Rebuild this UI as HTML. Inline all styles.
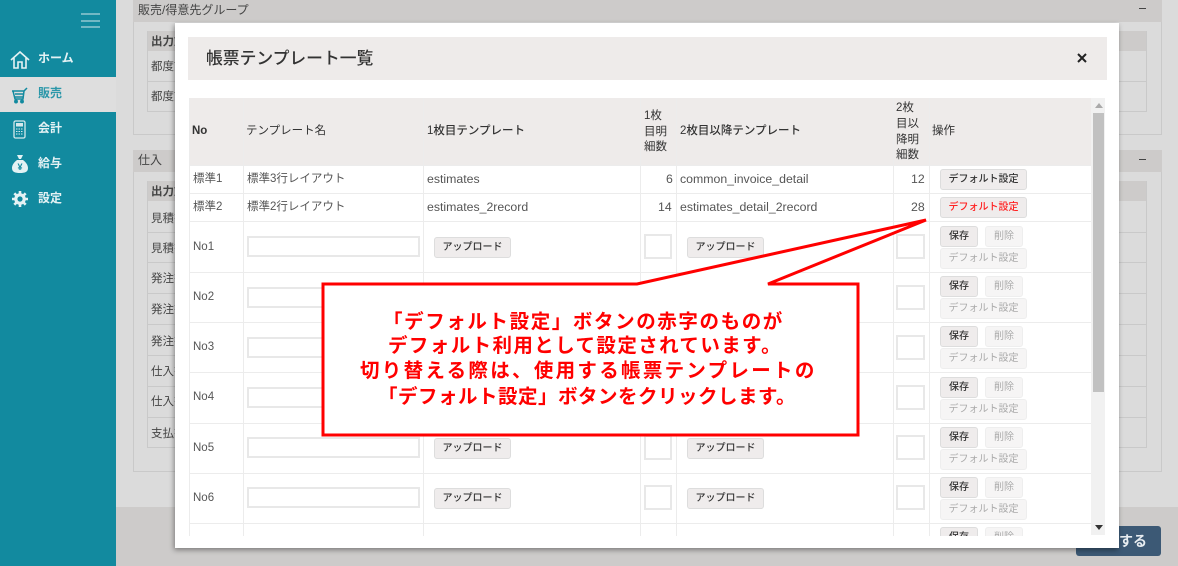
<!DOCTYPE html>
<html lang="ja"><head><meta charset="utf-8"><style>
html,body{margin:0;padding:0}
body{width:1178px;height:566px;position:relative;overflow:hidden;background:#dbdbdb;font-family:"Liberation Sans","Noto Sans CJK JP",sans-serif;color:#444;font-size:11.5px}
div,span,svg{position:absolute;box-sizing:border-box;white-space:nowrap}
.b{border:1px solid #c9c9c9}.h{background:#cdcbca;color:#444}
.nav{left:38px;color:#e4f2f4;font-weight:700;font-size:12px;line-height:16px}
.l{background:#ececec}
.t{line-height:16px;color:#555}.th{color:#333;font-weight:700}
.lat{font-size:12.3px}
.btn{background:#efecec;border:1px solid #ddd;border-radius:3px;color:#333;font-size:10px;text-align:center;line-height:20px;height:21px;font-weight:500}
.dis{background:#f6f5f5;border-color:#eee;color:#aaa;font-weight:400}
.in{background:#fff;border:2px solid #e8e8e8}
.rt{color:#f00;font-weight:700;font-size:19.5px;line-height:24px;text-align:left}
</style></head><body>
<div style="left:116px;top:0;width:1062px;height:507px;background:#dbdbdb"></div>
<div style="left:116px;top:507px;width:1062px;height:59px;background:#cdcbca"></div>
<div class="b" style="left:133px;top:0;width:1029px;height:135px"></div>
<div class="h" style="left:133px;top:0;width:1029px;height:22px;padding:1px 5px;font-size:12px">販売/得意先グループ</div>
<div class="b" style="left:147px;top:31px;width:1000px;height:81px"></div>
<div class="h" style="left:148px;top:31px;width:998px;height:20px;padding:2px 3px;font-weight:700">出力対象</div>
<div style="left:148px;top:81px;width:998px;height:1px;background:#c9c9c9"></div>
<div style="left:151px;top:58px">都度請求</div><div style="left:151px;top:88px">都度請求</div>
<div class="b" style="left:133px;top:150px;width:1029px;height:322px"></div>
<div class="h" style="left:133px;top:150px;width:1029px;height:22px;padding:1px 5px;font-size:12px">仕入</div>
<div class="b" style="left:147px;top:181px;width:1000px;height:267px"></div>
<div class="h" style="left:148px;top:181px;width:998px;height:20px;padding:2px 3px;font-weight:700">出力対象</div>
<div style="left:148px;top:232px;width:998px;height:1px;background:#c9c9c9"></div>
<div style="left:148px;top:262px;width:998px;height:1px;background:#c9c9c9"></div>
<div style="left:148px;top:293px;width:998px;height:1px;background:#c9c9c9"></div>
<div style="left:148px;top:324px;width:998px;height:1px;background:#c9c9c9"></div>
<div style="left:148px;top:355px;width:998px;height:1px;background:#c9c9c9"></div>
<div style="left:148px;top:386px;width:998px;height:1px;background:#c9c9c9"></div>
<div style="left:148px;top:417px;width:998px;height:1px;background:#c9c9c9"></div>
<div style="left:151px;top:210px">見積書</div><div style="left:151px;top:240px">見積書</div><div style="left:151px;top:270px">発注書</div><div style="left:151px;top:301px">発注書</div><div style="left:151px;top:333px">発注書</div><div style="left:151px;top:363px">仕入書</div><div style="left:151px;top:393px">仕入書</div><div style="left:151px;top:425px">支払書</div>
<div style="left:1139px;top:8px;width:7px;height:1px;background:#444"></div>
<div style="left:1139px;top:159px;width:7px;height:1px;background:#444"></div>
<div style="left:1076px;top:526px;width:85px;height:30px;background:#3c5975;border-radius:3px;color:#e8edf1;font-size:14px;font-weight:700;line-height:30px;padding-left:43px">する</div>

<div style="left:0;top:0;width:116px;height:566px;background:#128a9f"></div>
<div style="left:0;top:77px;width:116px;height:35px;background:#dedede"></div>
<div style="left:81px;top:13px;width:19px;height:2px;background:#72b8c4"></div><div style="left:81px;top:20px;width:19px;height:2px;background:#72b8c4"></div><div style="left:81px;top:26px;width:19px;height:2px;background:#72b8c4"></div>
<svg style="left:10px;top:50px" width="20" height="20" viewBox="0 0 20 20" fill="none" stroke="#e4f2f4" stroke-width="1.6"><path d="M1 10 10 2l9 8M4 8v10h4v-6h4v6h4V8"/></svg>
<svg style="left:11px;top:86px" width="18" height="18" viewBox="0 0 18 18" fill="none" stroke="#128a9f" stroke-width="1.5"><path d="M1 5h12l3-3M2 5l2 8h8l1-8M4 8h9M4 11h8"/><circle cx="5" cy="15.500" r="1.200" fill="#128a9f"/><circle cx="11" cy="15.500" r="1.200" fill="#128a9f"/></svg>
<svg style="left:13px;top:120px" width="14" height="19" viewBox="0 0 14 19"><rect x="1" y="1" width="11" height="17" rx="1.500" fill="none" stroke="#d5e9ec" stroke-width="1.300"/><rect x="3" y="3" width="7" height="3.500" fill="#d5e9ec"/><path d="M3 9h7M3 11.500h7M3 14h7" stroke="#d5e9ec" stroke-dasharray="1.500 1"/></svg>
<svg style="left:11px;top:154px" width="18" height="20" viewBox="0 0 18 20"><path d="M6 1h6l-2 4h-2zM6 6h6c4 3 5 6 5 8 0 4-3 5-8 5s-8-1-8-5c0-2 1-5 5-8z" fill="#e4f2f4"/><text x="9" y="16" font-size="9" font-weight="700" text-anchor="middle" fill="#128a9f">¥</text></svg>
<svg style="left:12px;top:190px" width="16" height="18" viewBox="0 0 16 16"><circle cx="8" cy="8" r="4.200" fill="none" stroke="#e4f2f4" stroke-width="3.200"/><path d="M8 0v3M8 13v3M0 8h3M13 8h3M2.300 2.300l2.200 2.200M11.500 11.500l2.200 2.200M2.300 13.700l2.200-2.200M11.500 4.500l2.200-2.200" stroke="#e4f2f4" stroke-width="2.600"/></svg>
<div class="nav" style="top:50px">ホーム</div><div class="nav" style="top:85px;color:#2b97a9">販売</div><div class="nav" style="top:120px">会計</div><div class="nav" style="top:155px">給与</div><div class="nav" style="top:190px">設定</div>

<div style="left:175px;top:23px;width:944px;height:525px;background:#fff;box-shadow:-1px 2px 5px rgba(0,0,0,.4)"></div>
<div style="left:188px;top:37px;width:919px;height:43px;background:#eeebea"></div>
<div style="left:206px;top:48px;font-size:16.8px;line-height:22px;color:#333;font-weight:500">帳票テンプレート一覧</div>
<svg style="left:1076px;top:52px" width="12" height="12" viewBox="0 0 12 12"><path d="M2 2l8 8M10 2l-8 8" stroke="#222" stroke-width="2"/></svg>

<div style="left:189px;top:98px;width:902px;height:67px;background:#eeebea"></div>
<div style="left:1091px;top:98px;width:14px;height:437px;background:#f1f1f1"></div>
<div style="left:1093px;top:113px;width:11px;height:279px;background:#c1c1c1"></div>
<div style="left:1095px;top:103px;border:4px solid transparent;border-top:0;border-bottom:5px solid #aaa"></div>
<div style="left:1095px;top:525px;border:4px solid transparent;border-bottom:0;border-top:5px solid #333"></div>

<div class="l" style="left:189px;top:98px;width:1px;height:438px"></div>
<div class="l" style="left:243px;top:98px;width:1px;height:438px"></div>
<div class="l" style="left:423px;top:98px;width:1px;height:438px"></div>
<div class="l" style="left:640px;top:98px;width:1px;height:438px"></div>
<div class="l" style="left:676px;top:98px;width:1px;height:438px"></div>
<div class="l" style="left:893px;top:98px;width:1px;height:438px"></div>
<div class="l" style="left:929px;top:98px;width:1px;height:438px"></div>
<div class="l" style="left:189px;top:165px;width:902px;height:1px"></div>
<div class="l" style="left:189px;top:193px;width:902px;height:1px"></div>
<div class="l" style="left:189px;top:221px;width:902px;height:1px"></div>
<div class="l" style="left:189px;top:272px;width:902px;height:1px"></div>
<div class="l" style="left:189px;top:322px;width:902px;height:1px"></div>
<div class="l" style="left:189px;top:372px;width:902px;height:1px"></div>
<div class="l" style="left:189px;top:423px;width:902px;height:1px"></div>
<div class="l" style="left:189px;top:473px;width:902px;height:1px"></div>
<div class="l" style="left:189px;top:523px;width:902px;height:1px"></div>

<div class="t th" style="left:192px;top:123px">No</div>
<div class="t" style="left:246px;top:123px;color:#333">テンプレート名</div>
<div class="t" style="left:427px;top:123px;font-weight:500;color:#333">1枚目テンプレート</div>
<div class="t" style="left:644px;top:108px;color:#333">1枚</div><div class="t" style="left:644px;top:124px;color:#333">目明</div><div class="t" style="left:644px;top:139px;color:#333">細数</div>
<div class="t" style="left:680px;top:123px;color:#333;font-weight:500">2枚目以降テンプレート</div>
<div class="t" style="left:896px;top:100px;color:#333">2枚</div><div class="t" style="left:896px;top:116px;color:#333">目以</div><div class="t" style="left:896px;top:132px;color:#333">降明</div><div class="t" style="left:896px;top:147px;color:#333">細数</div>
<div class="t" style="left:932px;top:123px;color:#333">操作</div>

<div class="t" style="left:193px;top:171px">標準1</div><div class="t" style="left:247px;top:171px">標準3行レイアウト</div><div class="t lat" style="left:427px;top:171px">estimates</div><div class="t lat" style="left:666px;top:171px">6</div><div class="t lat" style="left:680px;top:171px">common_invoice_detail</div><div class="t lat" style="left:911px;top:171px">12</div>
<div class="t" style="left:193px;top:199px">標準2</div><div class="t" style="left:247px;top:199px">標準2行レイアウト</div><div class="t lat" style="left:427px;top:199px">estimates_2record</div><div class="t lat" style="left:658px;top:199px">14</div><div class="t lat" style="left:680px;top:199px">estimates_detail_2record</div><div class="t lat" style="left:911px;top:199px">28</div>
<div class="btn" style="left:940px;top:169px;width:87px">デフォルト設定</div>
<div class="btn" style="left:940px;top:197px;width:87px;color:#f22">デフォルト設定</div>

<div class="t" style="left:193px;top:239px">No1</div><div class="in" style="left:247px;top:236px;width:173px;height:21px"></div><div class="btn" style="left:434px;top:237px;width:77px">アップロード</div><div class="in" style="left:644px;top:234px;width:28px;height:25px"></div><div class="btn" style="left:687px;top:237px;width:77px">アップロード</div><div class="in" style="left:896px;top:234px;width:29px;height:25px"></div>
<div class="btn" style="left:940px;top:226px;width:38px">保存</div><div class="btn dis" style="left:985px;top:226px;width:38px">削除</div><div class="btn dis" style="left:940px;top:248px;width:87px">デフォルト設定</div>

<div class="t" style="left:193px;top:289px">No2</div><div class="in" style="left:247px;top:287px;width:173px;height:21px"></div><div class="in" style="left:896px;top:285px;width:29px;height:25px"></div>
<div class="btn" style="left:940px;top:276px;width:38px">保存</div><div class="btn dis" style="left:985px;top:276px;width:38px">削除</div><div class="btn dis" style="left:940px;top:298px;width:87px">デフォルト設定</div>
<div class="t" style="left:193px;top:339px">No3</div><div class="in" style="left:247px;top:337px;width:173px;height:21px"></div><div class="in" style="left:896px;top:335px;width:29px;height:25px"></div>
<div class="btn" style="left:940px;top:326px;width:38px">保存</div><div class="btn dis" style="left:985px;top:326px;width:38px">削除</div><div class="btn dis" style="left:940px;top:348px;width:87px">デフォルト設定</div>
<div class="t" style="left:193px;top:389px">No4</div><div class="in" style="left:247px;top:387px;width:173px;height:21px"></div><div class="in" style="left:896px;top:385px;width:29px;height:25px"></div>
<div class="btn" style="left:940px;top:377px;width:38px">保存</div><div class="btn dis" style="left:985px;top:377px;width:38px">削除</div><div class="btn dis" style="left:940px;top:399px;width:87px">デフォルト設定</div>

<div class="t" style="left:193px;top:440px">No5</div><div class="in" style="left:247px;top:437px;width:173px;height:21px"></div><div class="btn" style="left:434px;top:438px;width:77px">アップロード</div><div class="in" style="left:644px;top:435px;width:28px;height:25px"></div><div class="btn" style="left:687px;top:438px;width:77px">アップロード</div><div class="in" style="left:896px;top:435px;width:29px;height:25px"></div>
<div class="btn" style="left:940px;top:427px;width:38px">保存</div><div class="btn dis" style="left:985px;top:427px;width:38px">削除</div><div class="btn dis" style="left:940px;top:449px;width:87px">デフォルト設定</div>
<div class="t" style="left:193px;top:490px">No6</div><div class="in" style="left:247px;top:487px;width:173px;height:21px"></div><div class="btn" style="left:434px;top:488px;width:77px">アップロード</div><div class="in" style="left:644px;top:485px;width:28px;height:25px"></div><div class="btn" style="left:687px;top:488px;width:77px">アップロード</div><div class="in" style="left:896px;top:485px;width:29px;height:25px"></div>
<div class="btn" style="left:940px;top:477px;width:38px">保存</div><div class="btn dis" style="left:985px;top:477px;width:38px">削除</div><div class="btn dis" style="left:940px;top:499px;width:87px">デフォルト設定</div>
<div style="left:930px;top:527px;width:160px;height:9px;overflow:hidden"><div class="btn" style="left:10px;top:0;width:38px">保存</div><div class="btn dis" style="left:55px;top:0;width:38px">削除</div></div>

<svg style="left:0;top:0" width="1178" height="566" viewBox="0 0 1178 566"><path d="M323 284H637L926 220 768 284H858V435H323Z" fill="#fff" stroke="#f00" stroke-width="3" stroke-linejoin="miter"/></svg>
<div class="rt" style="top:310px;left:383px;letter-spacing:1.6px">「デフォルト設定」ボタンの赤字のものが</div>
<div class="rt" style="top:334px;left:388px;letter-spacing:1.4px">デフォルト利用として設定されています。</div>
<div class="rt" style="top:359px;left:360px;letter-spacing:2.3px">切り替える際は、使用する帳票テンプレートの</div>
<div class="rt" style="top:385px;left:378px;letter-spacing:.5px">「デフォルト設定」ボタンをクリックします。</div>
</body></html>
